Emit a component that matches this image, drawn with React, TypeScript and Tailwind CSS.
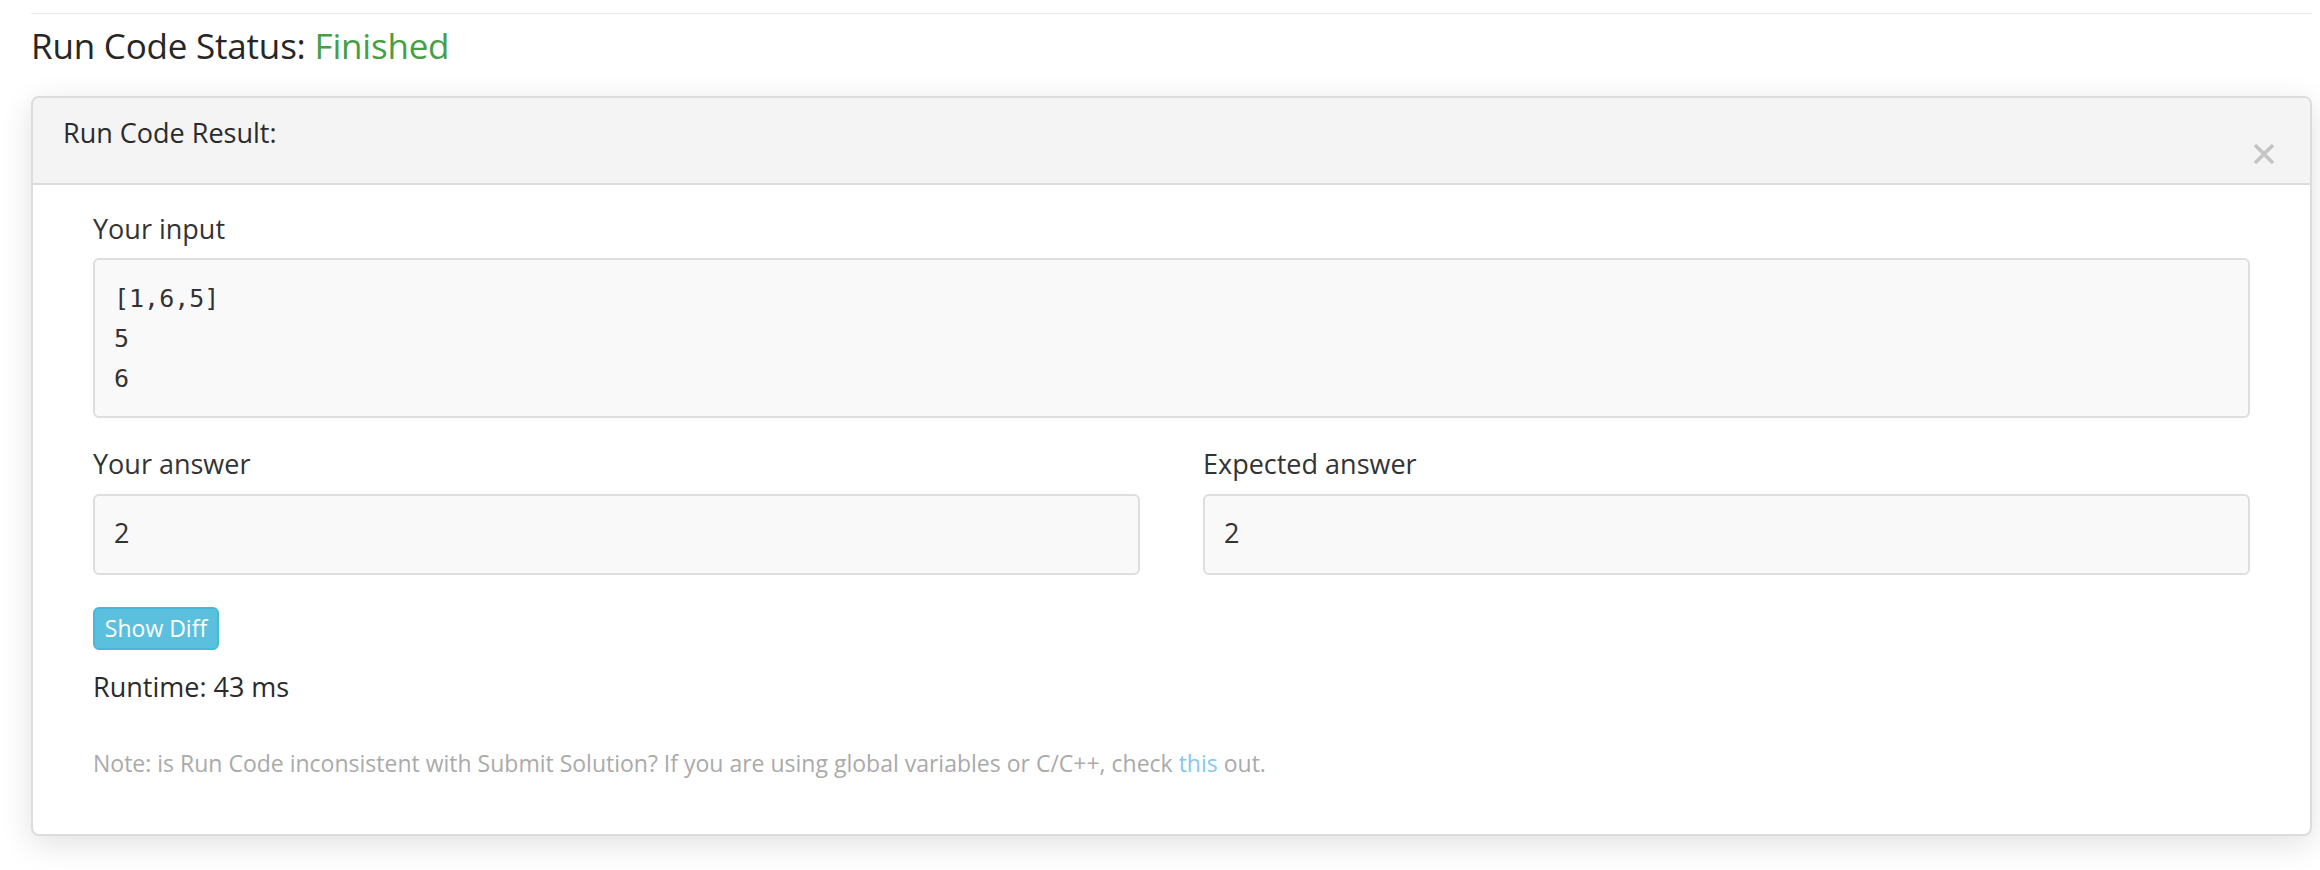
import React from 'react';

const input = ['[1,6,5]', '5', '6'];

const CloseIcon = () => (
  <svg width="22" height="22" viewBox="0 0 22 22" fill="none">
    <path d="M2 2 L20 20 M20 2 L2 20" stroke="#c4c4c4" strokeWidth="3.6" />
  </svg>
);

const Label = ({ children }: { children: React.ReactNode }) => (
  <div className="text-[27px] leading-[36px] text-[#333] font-medium">{children}</div>
);

const AnswerBox = ({ label, value }: { label: string; value: string }) => (
  <div>
    <Label>{label}</Label>
    <div className="mt-[12px] h-[81px] rounded-[6px] border-2 border-[#dedede] bg-[#f9f9f9] px-[19px] pt-[19px] text-[27px] leading-[36px] text-[#333]">
      {value}
    </div>
  </div>
);

export default function App() {
  return (
    <div className="w-[2320px] h-[870px] overflow-hidden bg-white font-['Open_Sans',sans-serif] text-[#333]">
      <div className="ml-[31px] w-[2281px] pt-[13px]">
        {/* top rule */}
        <div className="h-px bg-[#eaeaea]" />

        {/* Status heading */}
        <h3 className="mt-[10px] text-[35px] leading-[44px] text-[#262626] tracking-[-0.2px]">
          Run Code Status: <span className="text-[#45a045]">Finished</span>
        </h3>

        {/* Result card */}
        <div className="mt-[28px] rounded-[8px] border-2 border-[#dcdcdc] bg-white shadow-[0_8px_32px_rgba(0,0,0,0.12)] overflow-hidden">
          <div className="flex h-[87px] items-start justify-between border-b-2 border-[#dcdcdc] bg-[#f4f4f4] pl-[30px] pr-[35px]">
            <div className="pt-[17px] text-[27px] leading-[36px] text-[#2b2b2b]">Run Code Result:</div>
            <button className="mt-[45px] cursor-pointer">
              <CloseIcon />
            </button>
          </div>

          <div className="px-[60px] pt-[26px] pb-[54px]">
            <Label>Your input</Label>
            <div className="mt-[11px] h-[160px] rounded-[6px] border-2 border-[#dedede] bg-[#f9f9f9] pl-[19px] pt-[19px] font-['DejaVu_Sans_Mono',monospace] text-[25px] leading-[40px] text-[#333]">
              {input.map((line, i) => (
                <div key={i}>{line}</div>
              ))}
            </div>

            <div className="mt-[28px] grid grid-cols-2 gap-[63px]">
              <AnswerBox label="Your answer" value="2" />
              <AnswerBox label="Expected answer" value="2" />
            </div>

            <button className="mt-[32px] flex h-[43px] w-[126px] items-center justify-center rounded-[6px] border-2 border-[#46b8da] bg-[#5bc0de] text-[23px] text-white">
              Show Diff
            </button>

            <div className="mt-[19px] text-[27px] leading-[36px] text-[#2b2b2b]">Runtime: 43 ms</div>

            <p className="mt-[41px] text-[23px] leading-[34px] text-[#aaaaaa]">
              Note: is Run Code inconsistent with Submit Solution? If you are using global variables or C/C++, check{' '}
              <a className="text-[#82c8f2]">this</a> out.
            </p>
          </div>
        </div>
      </div>
    </div>
  );
}
